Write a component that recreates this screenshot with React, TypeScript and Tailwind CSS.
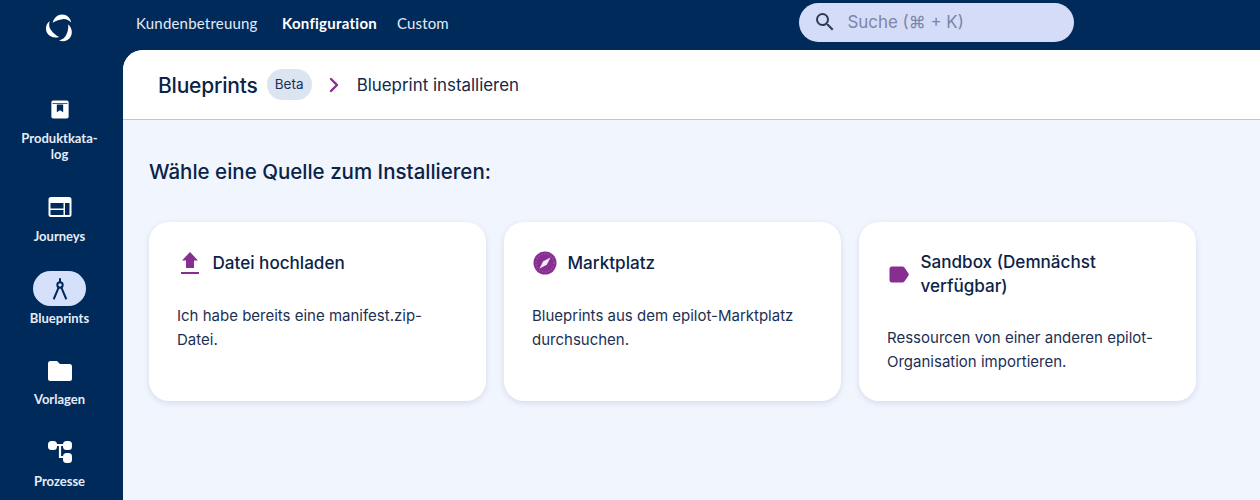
import { ChevronRight } from "lucide-react"
import type { ReactNode } from "react"

const inter = "font-['Inter',sans-serif]"
const lato = "font-['Lato',sans-serif]"

function Logo() {
  const arc = "M6.200 8.200C7.200 3.500 11 .4 15 .4 19.200 .4 22.800 3.500 23.400 8 21.200 5.600 18.600 4.500 15.500 4.800 12 5.100 8.800 6.200 6.200 8.200z"
  return (
    <svg width="28" height="28" viewBox="0 0 26 26" fill="#fff">
      <path d={arc} />
      <path d={arc} transform="rotate(120 13 13)" />
      <path d={arc} transform="rotate(240 13 13)" />
    </svg>
  )
}

function SideItem({ icon, label, active, tight, h }: { icon: ReactNode; label: ReactNode; active?: boolean; tight?: boolean; h: string }) {
  return (
    <div className={`flex flex-col items-center ${h}`}>
      <div className={`flex items-center justify-center w-[53px] h-[35px] rounded-full ${active ? "bg-[#d5e1fb] text-[#00285a]" : "text-white"}`}>
        {icon}
      </div>
      <div className={`${lato} ${tight ? "mt-[3px]" : "mt-[4px]"} text-[13px] leading-[16px] font-bold text-[#e6ecf7] text-center`}>{label}</div>
    </div>
  )
}

function Card({ icon, title, text, wide }: { icon: ReactNode; title: ReactNode; text: ReactNode; wide?: boolean }) {
  return (
    <div className={`w-[337px] h-[179px] rounded-[20px] bg-white shadow-[0_2px_6px_rgba(20,40,90,0.12)] px-[28px] ${wide ? "pt-[28px]" : "pt-[29px]"}`}>
      <div className="flex items-center">
        <div className="w-[35.500px] shrink-0 flex items-center">{icon}</div>
        <div className={`${wide ? "-ml-[2px]" : ""} text-[17.100px] leading-[24px] font-medium text-[#0b2347]`}>{title}</div>
      </div>
      <p className={`${wide ? "mt-[28px]" : "mt-[29px]"} text-[15px] leading-[24px] text-[#1c2f52]`}>{text}</p>
    </div>
  )
}

export default function App() {
  return (
    <div className={`${inter} flex h-[500px] w-[1260px] overflow-hidden bg-[#002a5a]`}>
      <aside className="w-[123px] shrink-0 flex flex-col items-center pr-[4px]">
        <div className="h-[92px] w-full flex justify-center pt-[14px]">
          <Logo />
        </div>
        <SideItem
          h="h-[97px]"
          tight
          label={<>Produktkata-<br />log</>}
          icon={
            <svg width="20" height="21" viewBox="0 0 22 22" fill="currentColor">
              <path fillRule="evenodd" d="M3.500 1h15A2 2 0 0 1 20.500 3v16a2 2 0 0 1-2 2h-15a2 2 0 0 1-2-2V3a2 2 0 0 1 2-2zM2.700 4v1h16.600V4zM7.500 5.500v8.500L11 11.700l3.500 2.300V5.500z" />
            </svg>
          }
        />
        <SideItem
          h="h-[82px]"
          label="Journeys"
          icon={
            <svg width="24" height="20" viewBox="0 0 24 20" fill="currentColor">
              <path fillRule="evenodd" d="M3 0h18a2.500 2.500 0 0 1 2.500 2.500v15A2.500 2.500 0 0 1 21 20H3A2.500 2.500 0 0 1 .500 17.500v-15A2.500 2.500 0 0 1 3 0zM2.500 6v5.500h13V6zM2.500 13v5h13v-5zM17 6v12h4.500V6z" />
            </svg>
          }
        />
        <SideItem
          h="h-[82px]"
          active
          label="Blueprints"
          icon={
            <svg width="18" height="24" viewBox="0 0 18 24" fill="none" stroke="currentColor" strokeWidth="2" strokeLinecap="round">
              <circle cx="9" cy="8" r="2.700" />
              <path d="M9 5.300V2M7.700 10.400 3 21.500M10.300 10.400 15 21.500" />
            </svg>
          }
        />
        <SideItem
          h="h-[81px]"
          tight
          label="Vorlagen"
          icon={
            <svg width="24" height="20" viewBox="0 0 24 20" fill="currentColor">
              <path d="M2.500 0H9l3 3h9.500A2.500 2.500 0 0 1 24 5.500v12a2.500 2.500 0 0 1-2.500 2.500h-19A2.500 2.500 0 0 1 0 17.500v-15A2.500 2.500 0 0 1 2.500 0z" />
            </svg>
          }
        />
        <SideItem
          h="h-[60px]"
          label="Prozesse"
          icon={
            <svg width="24" height="22" viewBox="0 0 24 22" fill="currentColor" stroke="none">
              <path d="M8 4h8M12 4v12h4" stroke="currentColor" strokeWidth="2.200" fill="none" />
              <rect x="0" y="0" width="9" height="9" rx="3.500" />
              <rect x="15" y="0" width="9" height="9" rx="3.500" />
              <rect x="15" y="12" width="9" height="10" rx="3.500" />
            </svg>
          }
        />
      </aside>

      <div className="flex-1 min-w-0 flex flex-col">
        <header className="h-[50px] shrink-0 flex items-center">
          <nav className={`${lato} flex items-center pl-[13px] -mt-[4px] text-[15px] text-[#e3eaf6]`}>
            <span className="w-[146px] tracking-[0.2px]">Kundenbetreuung</span>
            <span className="w-[115px] font-bold text-white tracking-[0.25px]">Konfiguration</span>
            <span className="tracking-[0.15px]">Custom</span>
          </nav>
          <div className="ml-auto mr-[186px] -mt-[6px] w-[275px] h-[39px] rounded-full bg-[#d5dcf8] flex items-center pl-[14px]">
            <svg width="24" height="24" viewBox="0 0 24 24" fill="#2f3a55">
              <path d="M15.500 14h-.79l-.28-.27A6.470 6.470 0 0 0 16 9.500 6.500 6.500 0 1 0 9.500 16c1.610 0 3.090-.59 4.230-1.570l.27.28v.79l5 4.990L20.490 19l-4.990-5zm-6 0C7.010 14 5 11.990 5 9.500S7.010 5 9.500 5 14 7.010 14 9.500 11.990 14 9.500 14z" />
            </svg>
            <span className="ml-[10.500px] pt-[2px] text-[16.900px] text-[#7c86a6]">Suche (⌘ + K)</span>
          </div>
        </header>

        <main className="flex-1 rounded-tl-[20px] overflow-hidden bg-[#f1f5fe]">
          <div className="h-[70px] bg-white border-b border-[#bfc5d2] flex items-center pl-[35px] text-[#0b2347]">
            <span className="pt-[2px] text-[21px] font-medium tracking-[-0.2px]">Blueprints</span>
            <span className="ml-[9px] h-[31px] w-[45px] rounded-full bg-[#dbe5f2] flex items-center justify-center text-[13.500px] text-[#1c2f52]">Beta</span>
            <ChevronRight size={24} strokeWidth={2.400} className="ml-[10px] text-[#8a3090]" />
            <span className="ml-[11px] pt-[2px] text-[16.900px] text-[#14284b]">Blueprint installieren</span>
          </div>
          <div className="pl-[26px]">
            <h1 className="mt-[37px] h-[29px] text-[20.500px] leading-[29px] font-medium text-[#0b2347]">Wähle eine Quelle zum Installieren:</h1>
            <div className="mt-[36px] flex gap-[18px]">
              <Card
                title="Datei hochladen"
                text={<>Ich habe bereits eine manifest.zip-<br />Datei.</>}
                icon={
                  <svg width="20" height="24" viewBox="0 0 20 24" className="ml-[3px]" fill="#862f90">
                    <path d="M10 1 18 9.500h-4V17H6V9.500H2z" />
                    <rect x="1" y="21" width="18" height="2" />
                  </svg>
                }
              />
              <Card
                title="Marktplatz"
                text={<>Blueprints aus dem epilot-Marktplatz<br />durchsuchen.</>}
                icon={
                  <svg width="24" height="24" viewBox="0 0 24 24" className="ml-[1px]">
                    <circle cx="12" cy="12" r="11.500" fill="#862f90" />
                    <circle cx="12" cy="12" r="9" fill="none" stroke="#c89bcd" strokeWidth="0.600" strokeDasharray="1.200 2" />
                    <path d="M17.500 6.500 13.800 13.800 6.500 17.500 10.200 10.200z" fill="#f3e8f5" />
                  </svg>
                }
              />
              <Card
                wide
                title={<>Sandbox (Demnächst<br />verfügbar)</>}
                icon={
                  <svg width="20" height="17" viewBox="0 0 20 17" className="ml-[2px]" fill="#862f90">
                    <path d="M3 .500h10.500c.8 0 1.400.3 1.900.9L19.500 7.500c.4.6.4 1.400 0 2l-4.100 6c-.5.600-1.100 1-1.900 1H3a2.500 2.500 0 0 1-2.500-2.500V3A2.500 2.500 0 0 1 3 .500z" />
                  </svg>
                }
                text={<>Ressourcen von einer anderen epilot-<br />Organisation importieren.</>}
              />
            </div>
          </div>
        </main>
      </div>
    </div>
  )
}
